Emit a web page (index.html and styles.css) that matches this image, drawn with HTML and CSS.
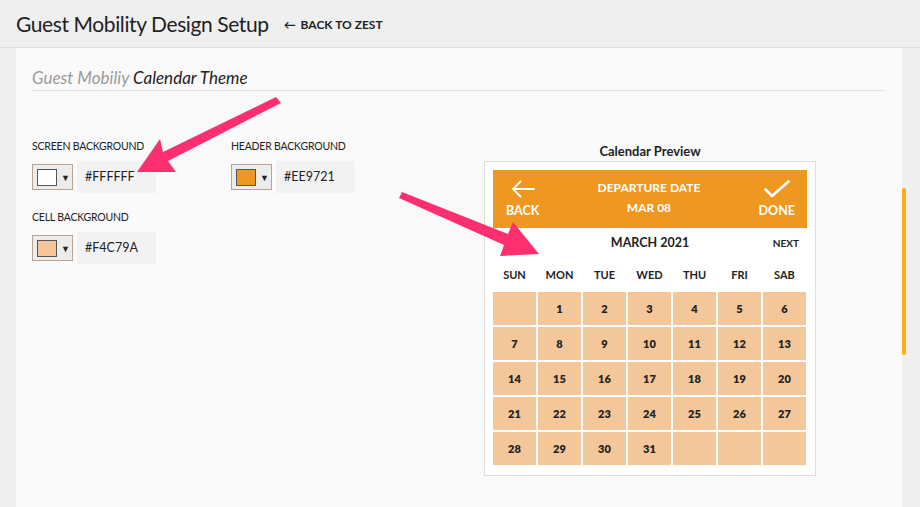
FILE: index.html
```html
<!DOCTYPE html>
<html>
<head>
<meta charset="utf-8">
<link rel="stylesheet" href="styles.css">
</head>
<body>
<header class="topbar">
  <h1 class="title">Guest Mobility Design Setup</h1>
  <a class="back-link"><span class="back-arrow">&#8592;</span> BACK TO ZEST</a>
</header>
<div class="page">
  <div class="gutter"></div>
  <main class="panel">
    <h2 class="section-title"><span class="muted">Guest Mobiliy</span> Calendar Theme</h2>
    <div class="content">
      <div class="form">
        <div class="field">
          <div class="label">SCREEN BACKGROUND</div>
          <div class="controls">
            <div class="picker"><span class="swatch sw-white"></span><span class="caret">&#9660;</span></div>
            <div class="hex">#FFFFFF</div>
          </div>
        </div>
        <div class="field">
          <div class="label">HEADER BACKGROUND</div>
          <div class="controls">
            <div class="picker"><span class="swatch sw-orange"></span><span class="caret">&#9660;</span></div>
            <div class="hex">#EE9721</div>
          </div>
        </div>
        <div class="field">
          <div class="label">CELL BACKGROUND</div>
          <div class="controls">
            <div class="picker"><span class="swatch sw-peach"></span><span class="caret">&#9660;</span></div>
            <div class="hex">#F4C79A</div>
          </div>
        </div>
      </div>
      <div class="preview">
        <div class="preview-title">Calendar Preview</div>
        <div class="cal">
          <div class="cal-head">
            <div class="cal-btn">
              <svg width="24" height="18" viewBox="0 0 24 18"><path d="M9.5 1.5 L2 9 L9.5 16.5 M2 9 H23" fill="none" stroke="#fff" stroke-width="1.8" stroke-linecap="round" stroke-linejoin="round"/></svg>
              <span>BACK</span>
            </div>
            <div class="cal-title">
              <div>DEPARTURE DATE</div>
              <div>MAR 08</div>
            </div>
            <div class="cal-btn">
              <svg width="26" height="18" viewBox="0 0 26 18"><path d="M1.5 9.5 L8 16 L24.5 1.5" fill="none" stroke="#fff" stroke-width="2.6" stroke-linecap="round" stroke-linejoin="round"/></svg>
              <span>DONE</span>
            </div>
          </div>
          <div class="month-row">
            <span class="month">MARCH 2021</span>
            <span class="next">NEXT</span>
          </div>
          <div class="days">
            <span>SUN</span><span>MON</span><span>TUE</span><span>WED</span><span>THU</span><span>FRI</span><span>SAB</span>
          </div>
          <div class="grid">
            <span></span><span>1</span><span>2</span><span>3</span><span>4</span><span>5</span><span>6</span>
            <span>7</span><span>8</span><span>9</span><span>10</span><span>11</span><span>12</span><span>13</span>
            <span>14</span><span>15</span><span>16</span><span>17</span><span>18</span><span>19</span><span>20</span>
            <span>21</span><span>22</span><span>23</span><span>24</span><span>25</span><span>26</span><span>27</span>
            <span>28</span><span>29</span><span>30</span><span>31</span><span></span><span></span><span></span>
          </div>
        </div>
      </div>
    </div>
  </main>
  <div class="rail"><div class="thumb"></div></div>
</div>
<svg class="annot" width="920" height="507" viewBox="0 0 920 507">
  <path d="M276 97 L281 103 L168 161 L176 172 L137 172 L160 139 L163 152 Z" fill="#fd2f6e"/>
  <path d="M402 192 L399 198 L504 245 L500 256 L539 254 L513 222 L508 234 Z" fill="#fd2f6e"/>
</svg>
</body>
</html>
```
FILE: styles.css
```css
html, body {
  margin: 0;
  padding: 0;
}
body {
  width: 920px;
  height: 507px;
  overflow: hidden;
  background: #efefef;
  font-family: "Lato", "Liberation Sans", sans-serif;
  color: #222;
  position: relative;
}
.topbar {
  display: flex;
  align-items: center;
  padding-left: 16px;
  border-bottom: 1px solid #e0e0e0;
  box-sizing: border-box;
  height: 48px;
}
.title {
  margin: 0;
  font-size: 21px;
  font-weight: 400;
  color: #222;
  letter-spacing: -0.4px;
}
.back-link {
  margin-left: 15px;
  font-size: 12px;
  font-weight: 700;
  color: #222;
  margin-top: 1px;
}
.back-arrow {
  font-size: 12px;
  margin-right: 2px;
}
.page {
  display: flex;
  height: 459px;
}
.gutter {
  width: 16px;
  flex: none;
}
.panel {
  flex: 1;
  background: #fafafa;
  padding: 18px 17px 0 16px;
}
.rail {
  width: 18px;
  flex: none;
}
.thumb {
  margin-top: 140px;
  width: 4px;
  height: 167px;
  border-radius: 2px;
  background: #ffab12;
}
.section-title {
  margin: 0;
  font-size: 17px;
  font-weight: 400;
  font-style: italic;
  line-height: 24px;
  color: #222;
  border-bottom: 1px solid #e2e2e2;
}
.muted {
  color: #9a9a9a;
}
.content {
  display: flex;
  padding-top: 48px;
}
.form {
  width: 452px;
  flex: none;
  display: grid;
  grid-template-columns: 199px 199px;
  row-gap: 17px;
  align-content: start;
}
.label {
  font-size: 10.5px;
  letter-spacing: -0.2px;
  line-height: 14px;
  color: #222;
  margin-bottom: 8px;
}
.controls {
  display: flex;
  align-items: center;
  gap: 4px;
}
.picker {
  width: 41px;
  height: 26px;
  box-sizing: border-box;
  border: 1px solid #b7a493;
  background: #ececec;
  display: flex;
  align-items: center;
  padding-left: 4px;
}
.swatch {
  width: 20px;
  height: 17px;
  box-sizing: border-box;
  border: 1px solid #555;
}
.sw-white { background: #fff; }
.sw-orange { background: #ee9721; }
.sw-peach { background: #f4c79a; }
.caret {
  font-size: 9px;
  margin-left: 4px;
  color: #222;
}
.hex {
  width: 79px;
  height: 32px;
  box-sizing: border-box;
  background: #f2f2f2;
  padding-left: 8px;
  font-size: 12.5px;
  line-height: 32px;
  color: #222;
}
.preview {
  width: 332px;
  flex: none;
  margin-top: 4px;
}
.preview-title {
  text-align: center;
  font-size: 13px;
  font-weight: 700;
  line-height: 16px;
  margin-bottom: 2px;
}
.cal {
  border: 1px solid #dedede;
  background: #fff;
  padding: 8px 8px 10px 8px;
}
.cal-head {
  height: 58px;
  background: #ee9721;
  display: flex;
  justify-content: space-between;
  align-items: flex-start;
  padding: 0 12px 0 13px;
  color: #fff;
  font-weight: 700;
}
.cal-btn {
  display: flex;
  flex-direction: column;
  align-items: center;
  padding-top: 10px;
  font-size: 12.5px;
}
.cal-btn span {
  margin-top: 5px;
  line-height: 15px;
}
.cal-title {
  text-align: center;
  font-size: 12px;
  line-height: 20px;
  padding-top: 8px;
}
.month-row {
  height: 29px;
  display: flex;
  align-items: center;
  justify-content: center;
  position: relative;
  font-weight: 700;
}
.month {
  font-size: 12.5px;
}
.next {
  position: absolute;
  right: 8px;
  font-size: 10px;
}
.days {
  height: 35px;
  display: grid;
  grid-template-columns: repeat(7, 43px);
  column-gap: 2px;
  align-items: center;
  text-align: center;
  font-size: 11px;
  font-weight: 700;
}
.grid {
  display: grid;
  grid-template-columns: repeat(7, 43px);
  grid-auto-rows: 33px;
  gap: 2px;
}
.grid span {
  background: #f4c79a;
  display: flex;
  align-items: center;
  justify-content: center;
  font-size: 11px;
  font-weight: 800;
  color: #222;
}
.annot {
  position: absolute;
  left: 0;
  top: 0;
  pointer-events: none;
}
```
